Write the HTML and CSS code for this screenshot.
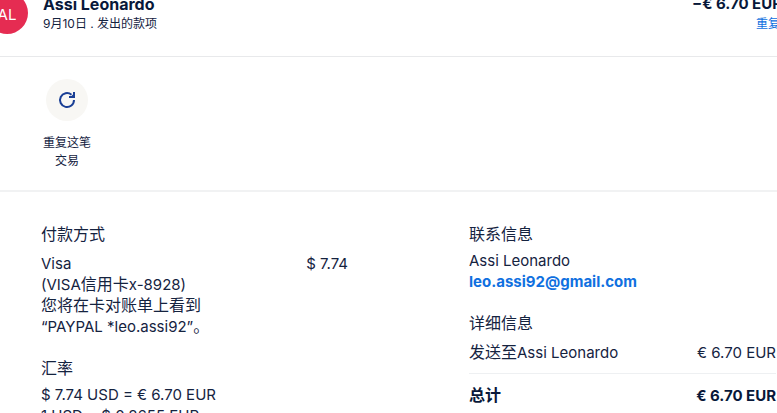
FILE: index.html
```
<!DOCTYPE html>
<html lang="zh-CN">
<head>
  <meta charset="UTF-8">
  <meta name="viewport" content="width=device-width, initial-scale=1.0">
  <title>交易详情</title>
  <link rel="stylesheet" href="styles.css">
</head>
<body>
  <!-- Transaction summary -->
  <header class="summary">
    <div class="avatar">AL</div>
    <div class="summary-info">
      <h1 class="name">Assi Leonardo</h1>
      <div class="date">9月10日 . 发出的款项</div>
    </div>
    <div class="summary-amount">
      <div class="name latin">−€ 6.70 EUR</div>
      <a href="#" class="repeat-link">重复这笔</a>
    </div>
  </header>

  <div class="actions">
    <button type="button" class="action">
      <span class="action-icon">
        <svg width="18" height="18" viewBox="0 0 18 18" fill="none" stroke="#1a3f95" stroke-width="2">
          <path d="M16 9A7 7 0 1 1 13.5 3.7"/>
          <path d="M17 1V7H11V5H13.4L15 3.6V1Z" fill="#1a3f95" stroke="none"/>
        </svg>
      </span>
      重复这笔交易
    </button>
  </div>

  <main class="details">
    <div class="column">
      <section>
        <h2>付款方式</h2>
        <div class="row">
          <div>
            <span class="latin">Visa</span><br>
            <span class="latin">(VISA</span>信用卡<span class="latin">x-8928)</span><br>
            您将在卡对账单上看到<br>
            <span class="latin">“PAYPAL *leo.assi92”</span>。
          </div>
          <div class="latin">$ 7.74</div>
        </div>
      </section>
      <section class="exchange">
        <h2>汇率</h2>
        <div class="latin">$ 7.74 USD = € 6.70 EUR<br>1 USD = $ 0.8655 EUR</div>
      </section>
    </div>

    <div class="column">
      <section class="contact">
        <h2>联系信息</h2>
        <div class="latin">Assi Leonardo</div>
        <a href="#" class="email latin">leo.assi92@gmail.com</a>
      </section>
      <section>
        <h2>详细信息</h2>
        <div class="row">
          <div>发送至<span class="latin">Assi Leonardo</span></div>
          <div class="latin">€ 6.70 EUR</div>
        </div>
        <div class="row total">
          <div>总计</div>
          <div class="latin">€ 6.70 EUR</div>
        </div>
      </section>
    </div>
  </main>
</body>
</html>
```
FILE: styles.css
```
/* Global Styles */
* {
  box-sizing: border-box;
}

body {
  margin: 0;
  overflow: hidden;
  background: #fff;
  color: #15233f;
  font-family: Inter, "Noto Sans CJK SC", sans-serif;
  font-size: 16px;
  font-weight: 400;
  line-height: 21px;
}

h1, h2 {
  margin: 0;
}

a {
  color: #0f70e0;
  text-decoration: none;
}

/* Summary */
.summary {
  display: flex;
  margin-top: -8px;
  margin-left: -14px;
  margin-right: -14px;
  height: 65px;
  border-bottom: 1px solid #e8e9eb;
}

.avatar {
  width: 42px;
  height: 42px;
  border-radius: 50%;
  background: #e52c52;
  color: #fff;
  font-size: 15px;
  line-height: 46px;
  text-align: center;
}

.summary-info {
  flex: 1;
  padding-left: 15px;
}

.name {
  color: #08183a;
  font-size: 16px;
  font-weight: 700;
  line-height: 24px;
}

.date {
  font-size: 12px;
  line-height: 16px;
}

.summary-amount {
  width: 99px;
  white-space: nowrap;
}

.repeat-link {
  display: block;
  padding-left: 64px;
  font-size: 12px;
  line-height: 16px;
}

/* Latin letters and digits run a little smaller than the Chinese */
.latin {
  font-size: 15px;
}

/* Actions */
.actions {
  padding: 22px 42px 20px;
  border-bottom: 2px solid #f1f2f3;
}

.action {
  display: block;
  width: 50px;
  padding: 0;
  border: none;
  background: none;
  color: inherit;
  font: inherit;
  font-size: 12px;
  line-height: 18px;
  text-align: center;
  cursor: pointer;
}

.action-icon {
  display: flex;
  align-items: center;
  justify-content: center;
  width: 42px;
  height: 42px;
  margin: 0 auto 13px;
  border-radius: 50%;
  background: #f8f7f4;
}

/* Details */
.details {
  display: flex;
  justify-content: space-between;
  padding: 32px 1px 0 41px;
}

.column {
  width: 307px;
}

section {
  margin-bottom: 21px;
}

h2 {
  margin-bottom: 8px;
  font-size: 16px;
  font-weight: 400;
}

.exchange h2,
.contact h2 {
  margin-bottom: 5px;
}

.row {
  display: flex;
  justify-content: space-between;
}

.email {
  font-weight: 700;
}

.total {
  margin-top: 10px;
  padding-top: 11px;
  border-top: 1px solid #eef0f2;
  color: #08183a;
  font-weight: 700;
}
```
